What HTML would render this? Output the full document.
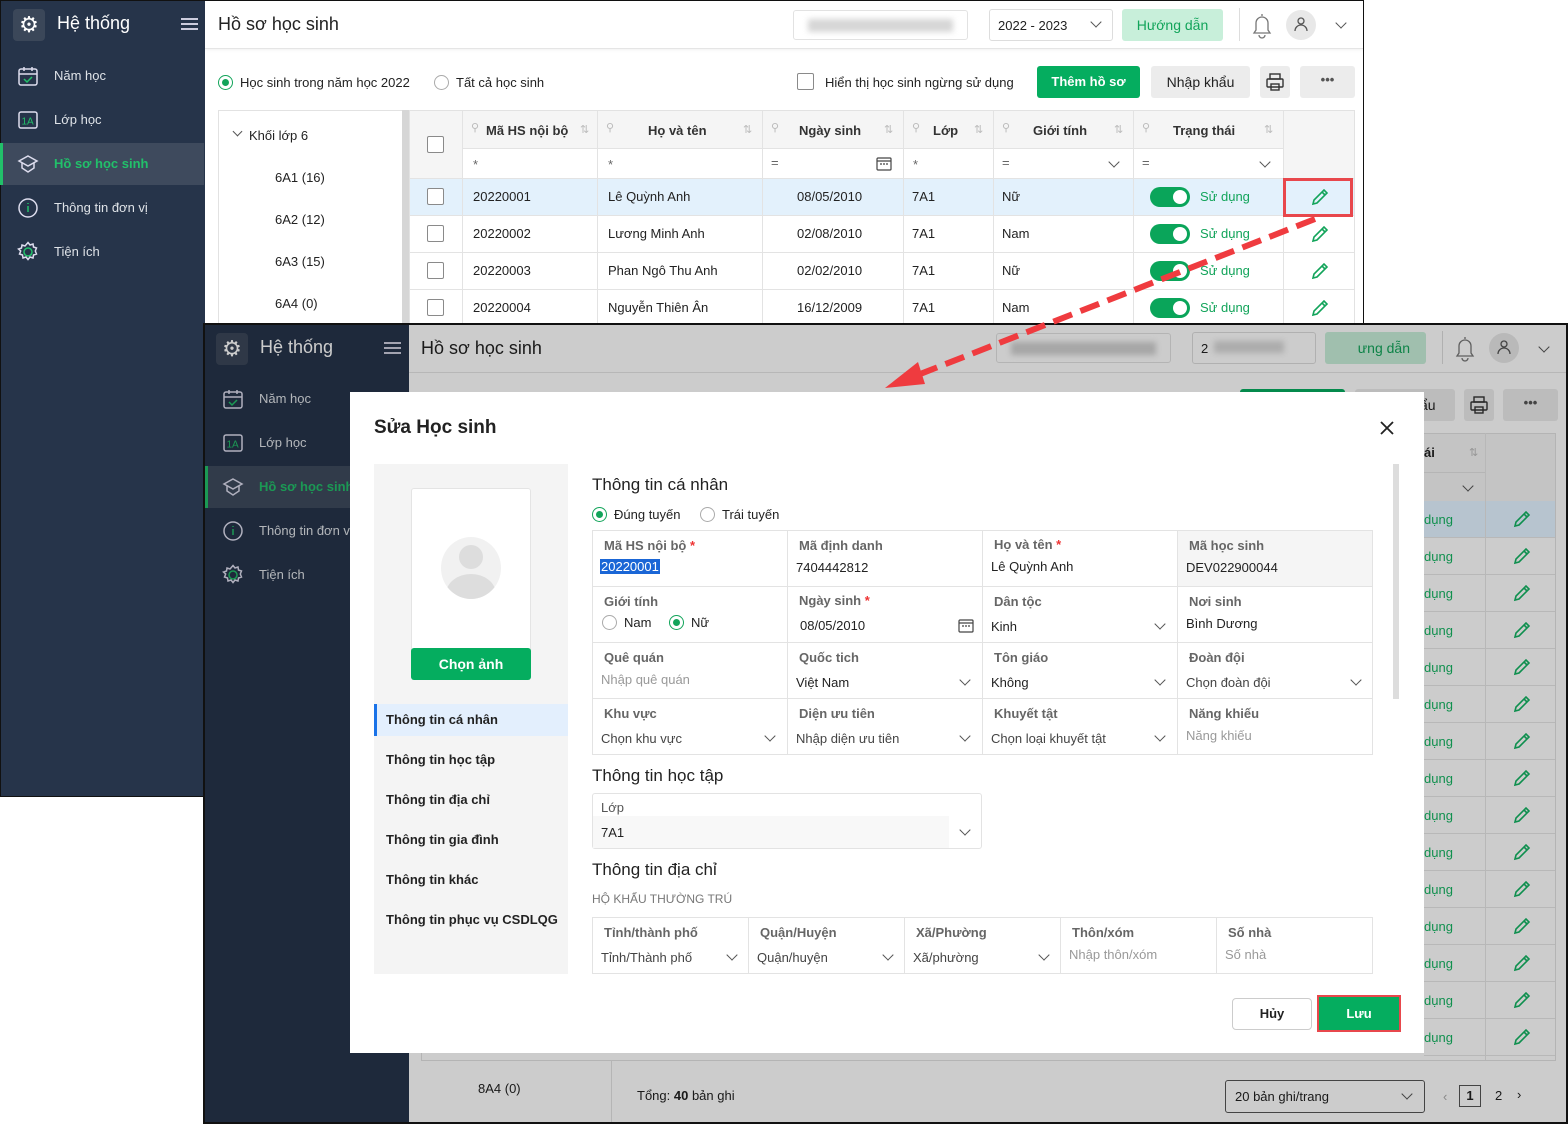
<!DOCTYPE html>
<html><head><meta charset="utf-8">
<style>
*{box-sizing:border-box;margin:0;padding:0}
body{width:1568px;height:1124px;position:relative;overflow:hidden;background:#fff;font-family:"Liberation Sans",sans-serif;font-size:13px;color:#222}
.a{position:absolute}
.sb{background:#26344a}
.mi{position:absolute;left:0;width:204px;height:42px;color:#dfe3e8;font-size:13px;line-height:42px;padding-left:54px}
.mi svg{position:absolute;left:17px;top:10px}
.mi.act{background:#3e4a5d;color:#22c06a;font-weight:bold;border-left:3px solid #22c06a;padding-left:51px}
.mi.act svg{left:14px}
.cb{position:absolute;width:17px;height:17px;border:1px solid #8a8a8a;border-radius:2px;background:#fff}
.th{position:absolute;font-weight:bold;font-size:13px;color:#333}
.cell{position:absolute;font-size:13px;color:#222}
.tog{position:absolute;width:40px;height:20px;border-radius:10px;background:#0aa55a}
.tog:after{content:"";position:absolute;right:3px;top:3px;width:14px;height:14px;border-radius:50%;background:#fff}
.g{color:#12a45a}
.lbl{position:absolute;font-size:13px;color:#666;font-weight:bold}
.val{position:absolute;font-size:13px;color:#222}
.ph{color:#999}
.chev{position:absolute;width:8px;height:8px;border-right:1.3px solid #555;border-bottom:1.3px solid #555;transform:rotate(45deg)}
.rad{position:absolute;width:15px;height:15px;border:1px solid #aaa;border-radius:50%;background:#fff}
.rad.on{border-color:#12a45a}
.rad.on:after{content:"";position:absolute;left:3px;top:3px;width:7px;height:7px;border-radius:50%;background:#12a45a}
.nav{position:absolute;left:374px;width:194px;height:32px;line-height:32px;padding-left:12px;font-size:13px;color:#222;font-weight:bold}
.vl{position:absolute;width:1px;background:#e3e3e3}
.hl{position:absolute;height:1px;background:#e3e3e3}
</style></head><body>

<!-- ===== FIRST SCREENSHOT ===== -->
<div class="a" style="left:0;top:0;width:1364px;height:797px;border:1px solid #111;background:#fff"></div>
<div class="a sb" style="left:1px;top:1px;width:204px;height:795px"></div>
<div class="a" style="left:13px;top:9px;width:32px;height:32px;border-radius:4px;background:#3b4759;color:#fff;font-size:22px;line-height:32px;text-align:center">⚙</div>
<div class="a" style="left:57px;top:13px;color:#fff;font-size:18px">Hệ thống</div>
<div class="a" style="left:181px;top:18px;width:17px;height:2px;background:#ccd;box-shadow:0 5px 0 #ccd,0 10px 0 #ccd"></div>
<div class="mi" style="top:55px"><svg width="22" height="22" viewBox="0 0 22 22" fill="none" stroke="#dde" stroke-width="1.5"><rect x="2" y="4" width="18" height="16" rx="2"/><path d="M2 9h18M7 2v4M15 2v4"/><path d="M7 14l3 3 5-5" stroke="#22c06a"/></svg>Năm học</div>
<div class="mi" style="top:99px"><svg width="22" height="22" viewBox="0 0 22 22" fill="none" stroke="#dde" stroke-width="1.5"><rect x="2" y="3" width="18" height="16" rx="2"/><text x="4.5" y="15.5" font-size="10" fill="#22c06a" stroke="none" font-family="Liberation Sans">1A</text></svg>Lớp học</div>
<div class="mi act" style="top:143px"><svg width="22" height="22" viewBox="0 0 22 22" fill="none" stroke="#dde" stroke-width="1.5"><path d="M11 3l9 5-9 5-9-5z"/><path d="M5 10v5l6 4 6-4v-5"/></svg>Hồ sơ học sinh</div>
<div class="mi" style="top:187px"><svg width="22" height="22" viewBox="0 0 22 22" fill="none" stroke="#dde" stroke-width="1.5"><circle cx="11" cy="11" r="9"/><path d="M11 9v6M11 6v1" stroke="#22c06a"/></svg>Thông tin đơn vị</div>
<div class="mi" style="top:231px"><svg width="22" height="22" viewBox="0 0 22 22" fill="none" stroke="#dde" stroke-width="1.5"><circle cx="11" cy="11" r="4" stroke="#22c06a"/><path d="M11 1.5l2 2.5 3-1 .5 3 3 1-1.2 3 1.2 3-3 1-.5 3-3-1-2 2.5-2-2.5-3 1-.5-3-3-1 1.2-3L1.5 8l3-1 .5-3 3 1z"/></svg>Tiện ích</div>

<!-- header -->
<div class="a" style="left:205px;top:1px;width:1158px;height:48px;background:#fff;border-bottom:1px solid #e5e5e5;box-shadow:0 1px 3px rgba(0,0,0,.06)"></div>
<div class="a" style="left:218px;top:14px;font-size:18px;color:#222">Hồ sơ học sinh</div>
<div class="a" style="left:793px;top:10px;width:175px;height:30px;border:1px solid #e2e2e2;border-radius:3px;background:#fff"><div style="margin:8px 14px;height:13px;background:#d6d6d6;filter:blur(3px)"></div></div>
<div class="a" style="left:989px;top:9px;width:124px;height:32px;border:1px solid #ddd;border-radius:3px;padding:8px 8px;font-size:13px">2022 - 2023</div>
<div class="chev" style="left:1092px;top:18px"></div>
<div class="a" style="left:1122px;top:9px;width:101px;height:32px;border-radius:3px;background:#c8efda;color:#12a45a;font-size:14px;text-align:center;line-height:32px">Hướng dẫn</div>
<div class="a" style="left:1239px;top:8px;width:1px;height:33px;background:#ddd"></div>
<svg class="a" style="left:1250px;top:11px" width="24" height="28" viewBox="0 0 24 28" fill="none" stroke="#777" stroke-width="1.3"><path d="M12 3v2M6 19V12a6 6 0 0112 0v7l2 3H4z"/><path d="M9 24a3 3 0 006 0"/></svg>
<div class="a" style="left:1286px;top:10px;width:30px;height:30px;border-radius:50%;background:#e8e8e8"></div>
<svg class="a" style="left:1293px;top:16px" width="16" height="16" viewBox="0 0 16 16" fill="none" stroke="#555" stroke-width="1.3"><circle cx="8" cy="5" r="3"/><path d="M2 15a6 6 0 0112 0"/></svg>
<div class="chev" style="left:1337px;top:19px"></div>

<!-- toolbar -->
<div class="rad on" style="left:218px;top:75px"></div>
<div class="a" style="left:240px;top:75px">Học sinh trong năm học 2022</div>
<div class="rad" style="left:434px;top:75px"></div>
<div class="a" style="left:456px;top:75px">Tất cả học sinh</div>
<div class="cb" style="left:797px;top:73px"></div>
<div class="a" style="left:825px;top:75px">Hiển thị học sinh ngừng sử dụng</div>
<div class="a" style="left:1037px;top:66px;width:103px;height:32px;border-radius:3px;background:#05ad5f;color:#fff;font-weight:bold;text-align:center;line-height:32px">Thêm hồ sơ</div>
<div class="a" style="left:1151px;top:66px;width:99px;height:32px;border-radius:3px;background:#ececec;text-align:center;line-height:32px;font-size:14px">Nhập khẩu</div>
<div class="a" style="left:1260px;top:66px;width:30px;height:32px;border-radius:3px;background:#ececec"></div>
<svg class="a" style="left:1265px;top:72px" width="20" height="20" viewBox="0 0 20 20" fill="none" stroke="#333" stroke-width="1.4"><rect x="5" y="2" width="10" height="5"/><rect x="2" y="7" width="16" height="8" rx="1"/><rect x="6" y="12" width="8" height="6"/></svg>
<div class="a" style="left:1300px;top:66px;width:55px;height:32px;border-radius:3px;background:#ececec;text-align:center;line-height:28px;font-weight:bold;color:#555">•••</div>

<!-- tree -->
<div class="a" style="left:218px;top:110px;width:185px;height:214px;border:1px solid #e2e2e2;border-bottom:none"></div>
<div class="a" style="left:402px;top:110px;width:7px;height:214px;background:#d6d6d6"></div>
<div class="chev" style="left:234px;top:128px;width:7px;height:7px"></div>
<div class="a" style="left:249px;top:128px">Khối lớp 6</div>
<div class="a" style="left:275px;top:170px">6A1 (16)</div>
<div class="a" style="left:275px;top:212px">6A2 (12)</div>
<div class="a" style="left:275px;top:254px">6A3 (15)</div>
<div class="a" style="left:275px;top:296px">6A4 (0)</div>

<!-- table -->
<div class="a" style="left:409px;top:110px;width:946px;height:214px;border:1px solid #e2e2e2;border-bottom:none;background:#fff"></div>
<div class="a" style="left:410px;top:111px;width:944px;height:68px;background:#f5f5f5"></div>
<div class="a" style="left:462px;top:148px;width:821px;height:30px;background:#fff"></div>
<div class="a" style="left:410px;top:179px;width:944px;height:37px;background:#e3f1fc"></div>
<div class="hl" style="left:462px;top:148px;width:821px"></div>
<div class="hl" style="left:410px;top:178px;width:944px"></div>
<div class="hl" style="left:410px;top:215px;width:944px"></div>
<div class="hl" style="left:410px;top:252px;width:944px"></div>
<div class="hl" style="left:410px;top:289px;width:944px"></div>
<div class="vl" style="left:462px;top:111px;height:212px"></div>
<div class="vl" style="left:597px;top:111px;height:212px"></div>
<div class="vl" style="left:762px;top:111px;height:212px"></div>
<div class="vl" style="left:903px;top:111px;height:212px"></div>
<div class="vl" style="left:993px;top:111px;height:212px"></div>
<div class="vl" style="left:1133px;top:111px;height:212px"></div>
<div class="vl" style="left:1283px;top:111px;height:212px"></div>
<div class="cb" style="left:427px;top:136px"></div>
<div class="th" style="left:486px;top:123px">Mã HS nội bộ</div>
<div class="th" style="left:648px;top:123px">Họ và tên</div>
<div class="th" style="left:799px;top:123px">Ngày sinh</div>
<div class="th" style="left:933px;top:123px">Lớp</div>
<div class="th" style="left:1033px;top:123px">Giới tính</div>
<div class="th" style="left:1173px;top:123px">Trạng thái</div>
<div class="a" style="left:471px;top:121px;color:#bbb;font-size:11px">⚲</div><div class="a" style="left:580px;top:123px;color:#bbb;font-size:11px">⇅</div>
<div class="a" style="left:606px;top:121px;color:#bbb;font-size:11px">⚲</div><div class="a" style="left:743px;top:123px;color:#bbb;font-size:11px">⇅</div>
<div class="a" style="left:771px;top:121px;color:#bbb;font-size:11px">⚲</div><div class="a" style="left:884px;top:123px;color:#bbb;font-size:11px">⇅</div>
<div class="a" style="left:912px;top:121px;color:#bbb;font-size:11px">⚲</div><div class="a" style="left:974px;top:123px;color:#bbb;font-size:11px">⇅</div>
<div class="a" style="left:1002px;top:121px;color:#bbb;font-size:11px">⚲</div><div class="a" style="left:1114px;top:123px;color:#bbb;font-size:11px">⇅</div>
<div class="a" style="left:1142px;top:121px;color:#bbb;font-size:11px">⚲</div><div class="a" style="left:1264px;top:123px;color:#bbb;font-size:11px">⇅</div>
<div class="a" style="left:473px;top:157px;color:#666">*</div>
<div class="a" style="left:608px;top:157px;color:#666">*</div>
<div class="a" style="left:771px;top:155px;color:#666">=</div>
<svg class="a" style="left:876px;top:156px" width="16" height="15" viewBox="0 0 16 15" fill="none" stroke="#444" stroke-width="1.2"><rect x="1" y="2" width="14" height="12" rx="1"/><path d="M1 5h14M4 8h2M7 8h2M10 8h2"/></svg>
<div class="a" style="left:913px;top:157px;color:#666">*</div>
<div class="a" style="left:1002px;top:155px;color:#666">=</div>
<div class="chev" style="left:1110px;top:158px"></div>
<div class="a" style="left:1142px;top:155px;color:#666">=</div>
<div class="chev" style="left:1261px;top:158px"></div>

<div class="cb" style="left:427px;top:188px"></div><div class="cell" style="left:473px;top:189px">20220001</div><div class="cell" style="left:608px;top:189px">Lê Quỳnh Anh</div><div class="cell" style="left:797px;top:189px">08/05/2010</div><div class="cell" style="left:912px;top:189px">7A1</div><div class="cell" style="left:1002px;top:189px">Nữ</div><div class="tog" style="left:1150px;top:187px"></div><div class="cell g" style="left:1200px;top:189px">Sử dụng</div>
<div class="cb" style="left:427px;top:225px"></div><div class="cell" style="left:473px;top:226px">20220002</div><div class="cell" style="left:608px;top:226px">Lương Minh Anh</div><div class="cell" style="left:797px;top:226px">02/08/2010</div><div class="cell" style="left:912px;top:226px">7A1</div><div class="cell" style="left:1002px;top:226px">Nam</div><div class="tog" style="left:1150px;top:224px"></div><div class="cell g" style="left:1200px;top:226px">Sử dụng</div>
<div class="cb" style="left:427px;top:262px"></div><div class="cell" style="left:473px;top:263px">20220003</div><div class="cell" style="left:608px;top:263px">Phan Ngô Thu Anh</div><div class="cell" style="left:797px;top:263px">02/02/2010</div><div class="cell" style="left:912px;top:263px">7A1</div><div class="cell" style="left:1002px;top:263px">Nữ</div><div class="tog" style="left:1150px;top:261px"></div><div class="cell g" style="left:1200px;top:263px">Sử dụng</div>
<div class="cb" style="left:427px;top:299px"></div><div class="cell" style="left:473px;top:300px">20220004</div><div class="cell" style="left:608px;top:300px">Nguyễn Thiên Ân</div><div class="cell" style="left:797px;top:300px">16/12/2009</div><div class="cell" style="left:912px;top:300px">7A1</div><div class="cell" style="left:1002px;top:300px">Nam</div><div class="tog" style="left:1150px;top:298px"></div><div class="cell g" style="left:1200px;top:300px">Sử dụng</div>
<svg class="a" style="left:1310px;top:187px" width="20" height="20" viewBox="0 0 20 20" fill="none" stroke="#12a45a" stroke-width="1.6"><path d="M3 17l1-4L14 3l3 3L7 16z M12 5l3 3"/></svg>
<svg class="a" style="left:1310px;top:224px" width="20" height="20" viewBox="0 0 20 20" fill="none" stroke="#12a45a" stroke-width="1.6"><path d="M3 17l1-4L14 3l3 3L7 16z M12 5l3 3"/></svg>
<svg class="a" style="left:1310px;top:261px" width="20" height="20" viewBox="0 0 20 20" fill="none" stroke="#12a45a" stroke-width="1.6"><path d="M3 17l1-4L14 3l3 3L7 16z M12 5l3 3"/></svg>
<svg class="a" style="left:1310px;top:298px" width="20" height="20" viewBox="0 0 20 20" fill="none" stroke="#12a45a" stroke-width="1.6"><path d="M3 17l1-4L14 3l3 3L7 16z M12 5l3 3"/></svg>
<div class="a" style="left:1283px;top:178px;width:70px;height:39px;border:3px solid #e8474c"></div>

<!-- ===== SECOND SCREENSHOT ===== -->
<div class="a" style="left:203px;top:323px;width:1365px;height:801px;background:#fff;overflow:hidden">
  <div class="a sb" style="left:2px;top:2px;width:204px;height:799px"></div>
  <div class="a" style="left:13px;top:10px;width:32px;height:32px;border-radius:4px;background:#3b4759;color:#fff;font-size:22px;line-height:32px;text-align:center">⚙</div>
  <div class="a" style="left:57px;top:14px;color:#fff;font-size:18px">Hệ thống</div>
  <div class="a" style="left:181px;top:19px;width:17px;height:2px;background:#ccd;box-shadow:0 5px 0 #ccd,0 10px 0 #ccd"></div>
  <div class="mi" style="top:55px;left:2px"><svg width="22" height="22" viewBox="0 0 22 22" fill="none" stroke="#dde" stroke-width="1.5"><rect x="2" y="4" width="18" height="16" rx="2"/><path d="M2 9h18M7 2v4M15 2v4"/><path d="M7 14l3 3 5-5" stroke="#22c06a"/></svg>Năm học</div>
  <div class="mi" style="top:99px;left:2px"><svg width="22" height="22" viewBox="0 0 22 22" fill="none" stroke="#dde" stroke-width="1.5"><rect x="2" y="3" width="18" height="16" rx="2"/><text x="4.5" y="15.5" font-size="10" fill="#22c06a" stroke="none" font-family="Liberation Sans">1A</text></svg>Lớp học</div>
  <div class="mi act" style="top:143px;left:2px"><svg width="22" height="22" viewBox="0 0 22 22" fill="none" stroke="#dde" stroke-width="1.5"><path d="M11 3l9 5-9 5-9-5z"/><path d="M5 10v5l6 4 6-4v-5"/></svg>Hồ sơ học sinh</div>
  <div class="mi" style="top:187px;left:2px"><svg width="22" height="22" viewBox="0 0 22 22" fill="none" stroke="#dde" stroke-width="1.5"><circle cx="11" cy="11" r="9"/><path d="M11 9v6M11 6v1" stroke="#22c06a"/></svg>Thông tin đơn vị</div>
  <div class="mi" style="top:231px;left:2px"><svg width="22" height="22" viewBox="0 0 22 22" fill="none" stroke="#dde" stroke-width="1.5"><circle cx="11" cy="11" r="4" stroke="#22c06a"/><path d="M11 1.5l2 2.5 3-1 .5 3 3 1-1.2 3 1.2 3-3 1-.5 3-3-1-2 2.5-2-2.5-3 1-.5-3-3-1 1.2-3L1.5 8l3-1 .5-3 3 1z"/></svg>Tiện ích</div>
  <!-- header -->
  <div class="a" style="left:206px;top:2px;width:1159px;height:48px;background:#fff;border-bottom:1px solid #e5e5e5"></div>
  <div class="a" style="left:218px;top:15px;font-size:18px;color:#222">Hồ sơ học sinh</div>
  <div class="a" style="left:793px;top:10px;width:175px;height:30px;border:1px solid #e2e2e2;border-radius:3px"><div style="margin:8px 14px;height:13px;background:#d0d0d0;filter:blur(3px)"></div></div>
  <div class="a" style="left:989px;top:9px;width:124px;height:32px;border:1px solid #ddd;border-radius:3px;padding:8px 8px">2<span style="display:inline-block;width:70px;height:12px;background:#d8d8d8;filter:blur(3px);margin-left:6px"></span></div>
  <div class="a" style="left:1122px;top:9px;width:101px;height:32px;border-radius:3px;background:#c8efda;color:#12a45a;font-size:14px;text-align:right;padding-right:16px;line-height:32px">ưng dẫn</div>
  <div class="a" style="left:1239px;top:8px;width:1px;height:33px;background:#ddd"></div>
  <svg class="a" style="left:1250px;top:11px" width="24" height="28" viewBox="0 0 24 28" fill="none" stroke="#777" stroke-width="1.3"><path d="M12 3v2M6 19V12a6 6 0 0112 0v7l2 3H4z"/><path d="M9 24a3 3 0 006 0"/></svg>
  <div class="a" style="left:1286px;top:10px;width:30px;height:30px;border-radius:50%;background:#e8e8e8"></div>
  <svg class="a" style="left:1293px;top:16px" width="16" height="16" viewBox="0 0 16 16" fill="none" stroke="#555" stroke-width="1.3"><circle cx="8" cy="5" r="3"/><path d="M2 15a6 6 0 0112 0"/></svg>
  <div class="chev" style="left:1337px;top:20px"></div>
  <!-- toolbar -->
  <div class="a" style="left:1037px;top:66px;width:105px;height:32px;border-radius:3px;background:#05ad5f"></div>
  <div class="a" style="left:1152px;top:66px;width:100px;height:32px;border-radius:3px;background:#ececec;line-height:32px;padding-left:65px;font-size:14px">ẩu</div>
  <div class="a" style="left:1261px;top:66px;width:30px;height:32px;border-radius:3px;background:#ececec"></div>
  <svg class="a" style="left:1266px;top:72px" width="20" height="20" viewBox="0 0 20 20" fill="none" stroke="#333" stroke-width="1.4"><rect x="5" y="2" width="10" height="5"/><rect x="2" y="7" width="16" height="8" rx="1"/><rect x="6" y="12" width="8" height="6"/></svg>
  <div class="a" style="left:1300px;top:66px;width:55px;height:32px;border-radius:3px;background:#ececec;text-align:center;line-height:28px;font-weight:bold;color:#555">•••</div>
  <!-- table bg -->
  <div class="a" style="left:218px;top:110px;width:1135px;height:691px;border:1px solid #e2e2e2;background:#fff"></div>
  <div class="a" style="left:1210px;top:111px;width:142px;height:67px;background:#f5f5f5"></div>
  <div class="a" style="left:1221px;top:122px;font-weight:bold">ái</div>
  <div class="a" style="left:1266px;top:123px;color:#bbb;font-size:11px">⇅</div>
  <div class="hl" style="left:1210px;top:149px;width:72px"></div>
  <div class="chev" style="left:1261px;top:159px"></div>
  <div class="vl" style="left:1282px;top:111px;height:690px"></div>
  <div class="a" style="left:1210px;top:179px;width:142px;height:37px;background:#e3f1fc"></div>
  <div id="rows"></div>
  <div class="a" style="left:218px;top:737px;width:1135px;height:64px;background:#fff;border-top:1px solid #e2e2e2"></div>
  <div class="vl" style="left:408px;top:737px;height:64px"></div>
  <div class="a" style="left:275px;top:758px">8A4 (0)</div>
  <div class="a" style="left:434px;top:765px">Tổng: <b>40</b> bản ghi</div>
  <div class="a" style="left:1022px;top:757px;width:200px;height:33px;border:1px solid #555;border-radius:3px;padding:8px 9px">20 bản ghi/trang</div>
  <div class="chev" style="left:1200px;top:767px"></div>
  <div class="a" style="left:1240px;top:766px;color:#aaa">‹</div>
  <div class="a" style="left:1256px;top:762px;width:22px;height:22px;border:1px solid #555;text-align:center;line-height:20px;font-weight:bold">1</div>
  <div class="a" style="left:1292px;top:765px">2</div>
  <div class="a" style="left:1314px;top:764px">›</div>
  <!-- overlay -->
  <div class="a" style="left:0;top:0;width:1365px;height:801px;background:rgba(0,0,0,.2)"></div>
  <div class="a" style="left:0;top:0;width:1365px;height:801px;border:2px solid #111"></div>
</div>
<!-- background right rows (inside overlay area, drawn over with dim) -->
<div class="a" style="left:1424px;top:476px;width:131px;height:590px;overflow:hidden">
</div>

<!-- ===== MODAL ===== -->
<div class="a" style="left:350px;top:392px;width:1074px;height:661px;background:#fff"></div>
<div class="a" style="left:374px;top:417px;font-size:19px;font-weight:bold;color:#222">Sửa Học sinh</div>
<svg class="a" style="left:1379px;top:420px" width="16" height="16" viewBox="0 0 16 16" stroke="#222" stroke-width="1.8"><path d="M2 2l12 12M14 2L2 14"/></svg>
<div class="a" style="left:374px;top:464px;width:194px;height:510px;background:#f4f4f4"></div>
<div class="a" style="left:411px;top:488px;width:120px;height:190px;background:#fff;border:1px solid #e4e4e4;border-radius:3px"></div>
<div class="a" style="left:441px;top:537px;width:60px;height:62px;border-radius:50%;background:#f1f1f1;overflow:hidden"><div style="position:absolute;left:18px;top:8px;width:24px;height:24px;border-radius:50%;background:#ddd"></div><div style="position:absolute;left:5px;top:37px;width:50px;height:40px;border-radius:50%;background:#ddd"></div></div>
<div class="a" style="left:411px;top:648px;width:120px;height:32px;border-radius:3px;background:#05ad5f;color:#fff;font-weight:bold;text-align:center;line-height:32px;font-size:14px">Chọn ảnh</div>
<div class="nav" style="top:704px;background:#e3effd;border-left:3px solid #1a73e8;padding-left:9px">Thông tin cá nhân</div>
<div class="nav" style="top:744px">Thông tin học tập</div>
<div class="nav" style="top:784px">Thông tin địa chỉ</div>
<div class="nav" style="top:824px">Thông tin gia đình</div>
<div class="nav" style="top:864px">Thông tin khác</div>
<div class="nav" style="top:904px">Thông tin phục vụ CSDLQG</div>
<div class="a" style="left:1393px;top:464px;width:6px;height:235px;background:#ddd"></div>

<div class="a" style="left:592px;top:475px;font-size:17px">Thông tin cá nhân</div>
<div class="rad on" style="left:592px;top:507px"></div><div class="a" style="left:614px;top:507px">Đúng tuyến</div>
<div class="rad" style="left:700px;top:507px"></div><div class="a" style="left:722px;top:507px">Trái tuyến</div>

<div class="a" style="left:592px;top:530px;width:781px;height:225px;border:1px solid #e3e3e3"></div>
<div class="a" style="left:1177px;top:531px;width:195px;height:55px;background:#f5f5f5"></div>
<div class="hl" style="left:592px;top:586px;width:781px"></div>
<div class="hl" style="left:592px;top:642px;width:781px"></div>
<div class="hl" style="left:592px;top:698px;width:781px"></div>
<div class="vl" style="left:787px;top:530px;height:225px"></div>
<div class="vl" style="left:982px;top:530px;height:225px"></div>
<div class="vl" style="left:1177px;top:530px;height:225px"></div>

<div class="lbl" style="left:604px;top:538px">Mã HS nội bộ <span style="color:#e33">*</span></div>
<div class="val" style="left:600px;top:559px;background:#1a66d6;color:#fff;padding:0 1px">20220001</div>
<div class="lbl" style="left:799px;top:538px">Mã định danh</div><div class="val" style="left:796px;top:560px">7404442812</div>
<div class="lbl" style="left:994px;top:537px">Họ và tên <span style="color:#e33">*</span></div><div class="val" style="left:991px;top:559px">Lê Quỳnh Anh</div>
<div class="lbl" style="left:1189px;top:538px">Mã học sinh</div><div class="val" style="left:1186px;top:560px">DEV022900044</div>

<div class="lbl" style="left:604px;top:594px">Giới tính</div>
<div class="rad" style="left:602px;top:615px"></div><div class="val" style="left:624px;top:615px">Nam</div>
<div class="rad on" style="left:669px;top:615px"></div><div class="val" style="left:691px;top:615px">Nữ</div>
<div class="lbl" style="left:799px;top:593px">Ngày sinh <span style="color:#e33">*</span></div><div class="val" style="left:800px;top:618px">08/05/2010</div>
<svg class="a" style="left:958px;top:618px" width="16" height="15" viewBox="0 0 16 15" fill="none" stroke="#444" stroke-width="1.2"><rect x="1" y="2" width="14" height="12" rx="1"/><path d="M1 5h14M4 8h2M7 8h2M10 8h2"/></svg>
<div class="lbl" style="left:994px;top:594px">Dân tộc</div><div class="val" style="left:991px;top:619px">Kinh</div><div class="chev" style="left:1156px;top:620px"></div>
<div class="lbl" style="left:1189px;top:594px">Nơi sinh</div><div class="val" style="left:1186px;top:616px">Bình Dương</div>

<div class="lbl" style="left:604px;top:650px">Quê quán</div><div class="val ph" style="left:601px;top:672px">Nhập quê quán</div>
<div class="lbl" style="left:799px;top:650px">Quốc tich</div><div class="val" style="left:796px;top:675px">Việt Nam</div><div class="chev" style="left:961px;top:676px"></div>
<div class="lbl" style="left:994px;top:650px">Tôn giáo</div><div class="val" style="left:991px;top:675px">Không</div><div class="chev" style="left:1156px;top:676px"></div>
<div class="lbl" style="left:1189px;top:650px">Đoàn đội</div><div class="val" style="left:1186px;top:675px;color:#444">Chọn đoàn đội</div><div class="chev" style="left:1352px;top:676px"></div>

<div class="lbl" style="left:604px;top:706px">Khu vực</div><div class="val" style="left:601px;top:731px;color:#444">Chọn khu vực</div><div class="chev" style="left:766px;top:732px"></div>
<div class="lbl" style="left:799px;top:706px">Diện ưu tiên</div><div class="val" style="left:796px;top:731px;color:#444">Nhập diện ưu tiên</div><div class="chev" style="left:961px;top:732px"></div>
<div class="lbl" style="left:994px;top:706px">Khuyết tật</div><div class="val" style="left:991px;top:731px;color:#444">Chọn loại khuyết tật</div><div class="chev" style="left:1156px;top:732px"></div>
<div class="lbl" style="left:1189px;top:706px">Năng khiếu</div><div class="val ph" style="left:1186px;top:728px">Năng khiếu</div>

<div class="a" style="left:592px;top:766px;font-size:17px">Thông tin học tập</div>
<div class="a" style="left:592px;top:793px;width:390px;height:56px;border:1px solid #e3e3e3;border-radius:3px"></div>
<div class="a" style="left:593px;top:816px;width:356px;height:32px;background:#f8f8f8"></div>
<div class="lbl" style="left:601px;top:800px;font-weight:normal;color:#555">Lớp</div>
<div class="val" style="left:601px;top:825px">7A1</div><div class="chev" style="left:961px;top:826px"></div>

<div class="a" style="left:592px;top:860px;font-size:17px">Thông tin địa chỉ</div>
<div class="a" style="left:592px;top:892px;font-size:12px;color:#777">HỘ KHẨU THƯỜNG TRÚ</div>
<div class="a" style="left:592px;top:917px;width:781px;height:57px;border:1px solid #e3e3e3"></div>
<div class="vl" style="left:748px;top:917px;height:57px"></div>
<div class="vl" style="left:904px;top:917px;height:57px"></div>
<div class="vl" style="left:1060px;top:917px;height:57px"></div>
<div class="vl" style="left:1216px;top:917px;height:57px"></div>
<div class="lbl" style="left:604px;top:925px">Tỉnh/thành phố</div><div class="val" style="left:601px;top:950px;color:#444">Tỉnh/Thành phố</div><div class="chev" style="left:728px;top:951px"></div>
<div class="lbl" style="left:760px;top:925px">Quận/Huyện</div><div class="val" style="left:757px;top:950px;color:#444">Quận/huyện</div><div class="chev" style="left:884px;top:951px"></div>
<div class="lbl" style="left:916px;top:925px">Xã/Phường</div><div class="val" style="left:913px;top:950px;color:#444">Xã/phường</div><div class="chev" style="left:1040px;top:951px"></div>
<div class="lbl" style="left:1072px;top:925px">Thôn/xóm</div><div class="val ph" style="left:1069px;top:947px">Nhập thôn/xóm</div>
<div class="lbl" style="left:1228px;top:925px">Số nhà</div><div class="val ph" style="left:1225px;top:947px">Số nhà</div>

<div class="a" style="left:1232px;top:998px;width:80px;height:32px;border:1px solid #ccc;border-radius:4px;text-align:center;line-height:30px;font-weight:bold">Hủy</div>
<div class="a" style="left:1317px;top:995px;width:84px;height:37px;border:2px solid #e8474c;background:#05ad5f;color:#fff;font-weight:bold;text-align:center;line-height:33px">Lưu</div>

<!-- arrow -->
<svg class="a" style="left:0;top:0" width="1568" height="1124">
<line x1="1315" y1="219" x2="910" y2="378" stroke="#ef3b3f" stroke-width="6" stroke-dasharray="20,9"/>
<polygon points="885,388 918,362 925,384" fill="#ef3b3f"/>
</svg>

<script>
(function(){
var h='';
for(var i=0;i<15;i++){
var y=476+43+i*37-476; // relative
}
})();
</script>
<div class="a" style="left:1424px;top:501px;width:131px;height:560px;">
</div>
<div id="bgrows"></div>
<style>
.br{position:absolute;left:1424px;width:131px;height:37px;border-bottom:1px solid #b8b8b8}
.br span{position:absolute;left:0;top:11px;color:#10904e;font-size:13px}
.br svg{position:absolute;left:88px;top:8px}
</style>
<div class="br" style="top:501px;background:#b7c4cf"><span>dụng</span><svg width="20" height="20" viewBox="0 0 20 20" fill="none" stroke="#0e8f4e" stroke-width="1.6"><path d="M3 17l1-4L14 3l3 3L7 16z M12 5l3 3"/></svg></div>
<div class="br" style="top:538px;background:#ccc"><span>dụng</span><svg width="20" height="20" viewBox="0 0 20 20" fill="none" stroke="#0e8f4e" stroke-width="1.6"><path d="M3 17l1-4L14 3l3 3L7 16z M12 5l3 3"/></svg></div>
<div class="br" style="top:575px;background:#ccc"><span>dụng</span><svg width="20" height="20" viewBox="0 0 20 20" fill="none" stroke="#0e8f4e" stroke-width="1.6"><path d="M3 17l1-4L14 3l3 3L7 16z M12 5l3 3"/></svg></div>
<div class="br" style="top:612px;background:#ccc"><span>dụng</span><svg width="20" height="20" viewBox="0 0 20 20" fill="none" stroke="#0e8f4e" stroke-width="1.6"><path d="M3 17l1-4L14 3l3 3L7 16z M12 5l3 3"/></svg></div>
<div class="br" style="top:649px;background:#ccc"><span>dụng</span><svg width="20" height="20" viewBox="0 0 20 20" fill="none" stroke="#0e8f4e" stroke-width="1.6"><path d="M3 17l1-4L14 3l3 3L7 16z M12 5l3 3"/></svg></div>
<div class="br" style="top:686px;background:#ccc"><span>dụng</span><svg width="20" height="20" viewBox="0 0 20 20" fill="none" stroke="#0e8f4e" stroke-width="1.6"><path d="M3 17l1-4L14 3l3 3L7 16z M12 5l3 3"/></svg></div>
<div class="br" style="top:723px;background:#ccc"><span>dụng</span><svg width="20" height="20" viewBox="0 0 20 20" fill="none" stroke="#0e8f4e" stroke-width="1.6"><path d="M3 17l1-4L14 3l3 3L7 16z M12 5l3 3"/></svg></div>
<div class="br" style="top:760px;background:#ccc"><span>dụng</span><svg width="20" height="20" viewBox="0 0 20 20" fill="none" stroke="#0e8f4e" stroke-width="1.6"><path d="M3 17l1-4L14 3l3 3L7 16z M12 5l3 3"/></svg></div>
<div class="br" style="top:797px;background:#ccc"><span>dụng</span><svg width="20" height="20" viewBox="0 0 20 20" fill="none" stroke="#0e8f4e" stroke-width="1.6"><path d="M3 17l1-4L14 3l3 3L7 16z M12 5l3 3"/></svg></div>
<div class="br" style="top:834px;background:#ccc"><span>dụng</span><svg width="20" height="20" viewBox="0 0 20 20" fill="none" stroke="#0e8f4e" stroke-width="1.6"><path d="M3 17l1-4L14 3l3 3L7 16z M12 5l3 3"/></svg></div>
<div class="br" style="top:871px;background:#ccc"><span>dụng</span><svg width="20" height="20" viewBox="0 0 20 20" fill="none" stroke="#0e8f4e" stroke-width="1.6"><path d="M3 17l1-4L14 3l3 3L7 16z M12 5l3 3"/></svg></div>
<div class="br" style="top:908px;background:#ccc"><span>dụng</span><svg width="20" height="20" viewBox="0 0 20 20" fill="none" stroke="#0e8f4e" stroke-width="1.6"><path d="M3 17l1-4L14 3l3 3L7 16z M12 5l3 3"/></svg></div>
<div class="br" style="top:945px;background:#ccc"><span>dụng</span><svg width="20" height="20" viewBox="0 0 20 20" fill="none" stroke="#0e8f4e" stroke-width="1.6"><path d="M3 17l1-4L14 3l3 3L7 16z M12 5l3 3"/></svg></div>
<div class="br" style="top:982px;background:#ccc"><span>dụng</span><svg width="20" height="20" viewBox="0 0 20 20" fill="none" stroke="#0e8f4e" stroke-width="1.6"><path d="M3 17l1-4L14 3l3 3L7 16z M12 5l3 3"/></svg></div>
<div class="br" style="top:1019px;background:#ccc"><span>dụng</span><svg width="20" height="20" viewBox="0 0 20 20" fill="none" stroke="#0e8f4e" stroke-width="1.6"><path d="M3 17l1-4L14 3l3 3L7 16z M12 5l3 3"/></svg></div>
<div class="a" style="left:1485px;top:433px;width:1px;height:627px;background:#b8b8b8"></div>
</body></html>
